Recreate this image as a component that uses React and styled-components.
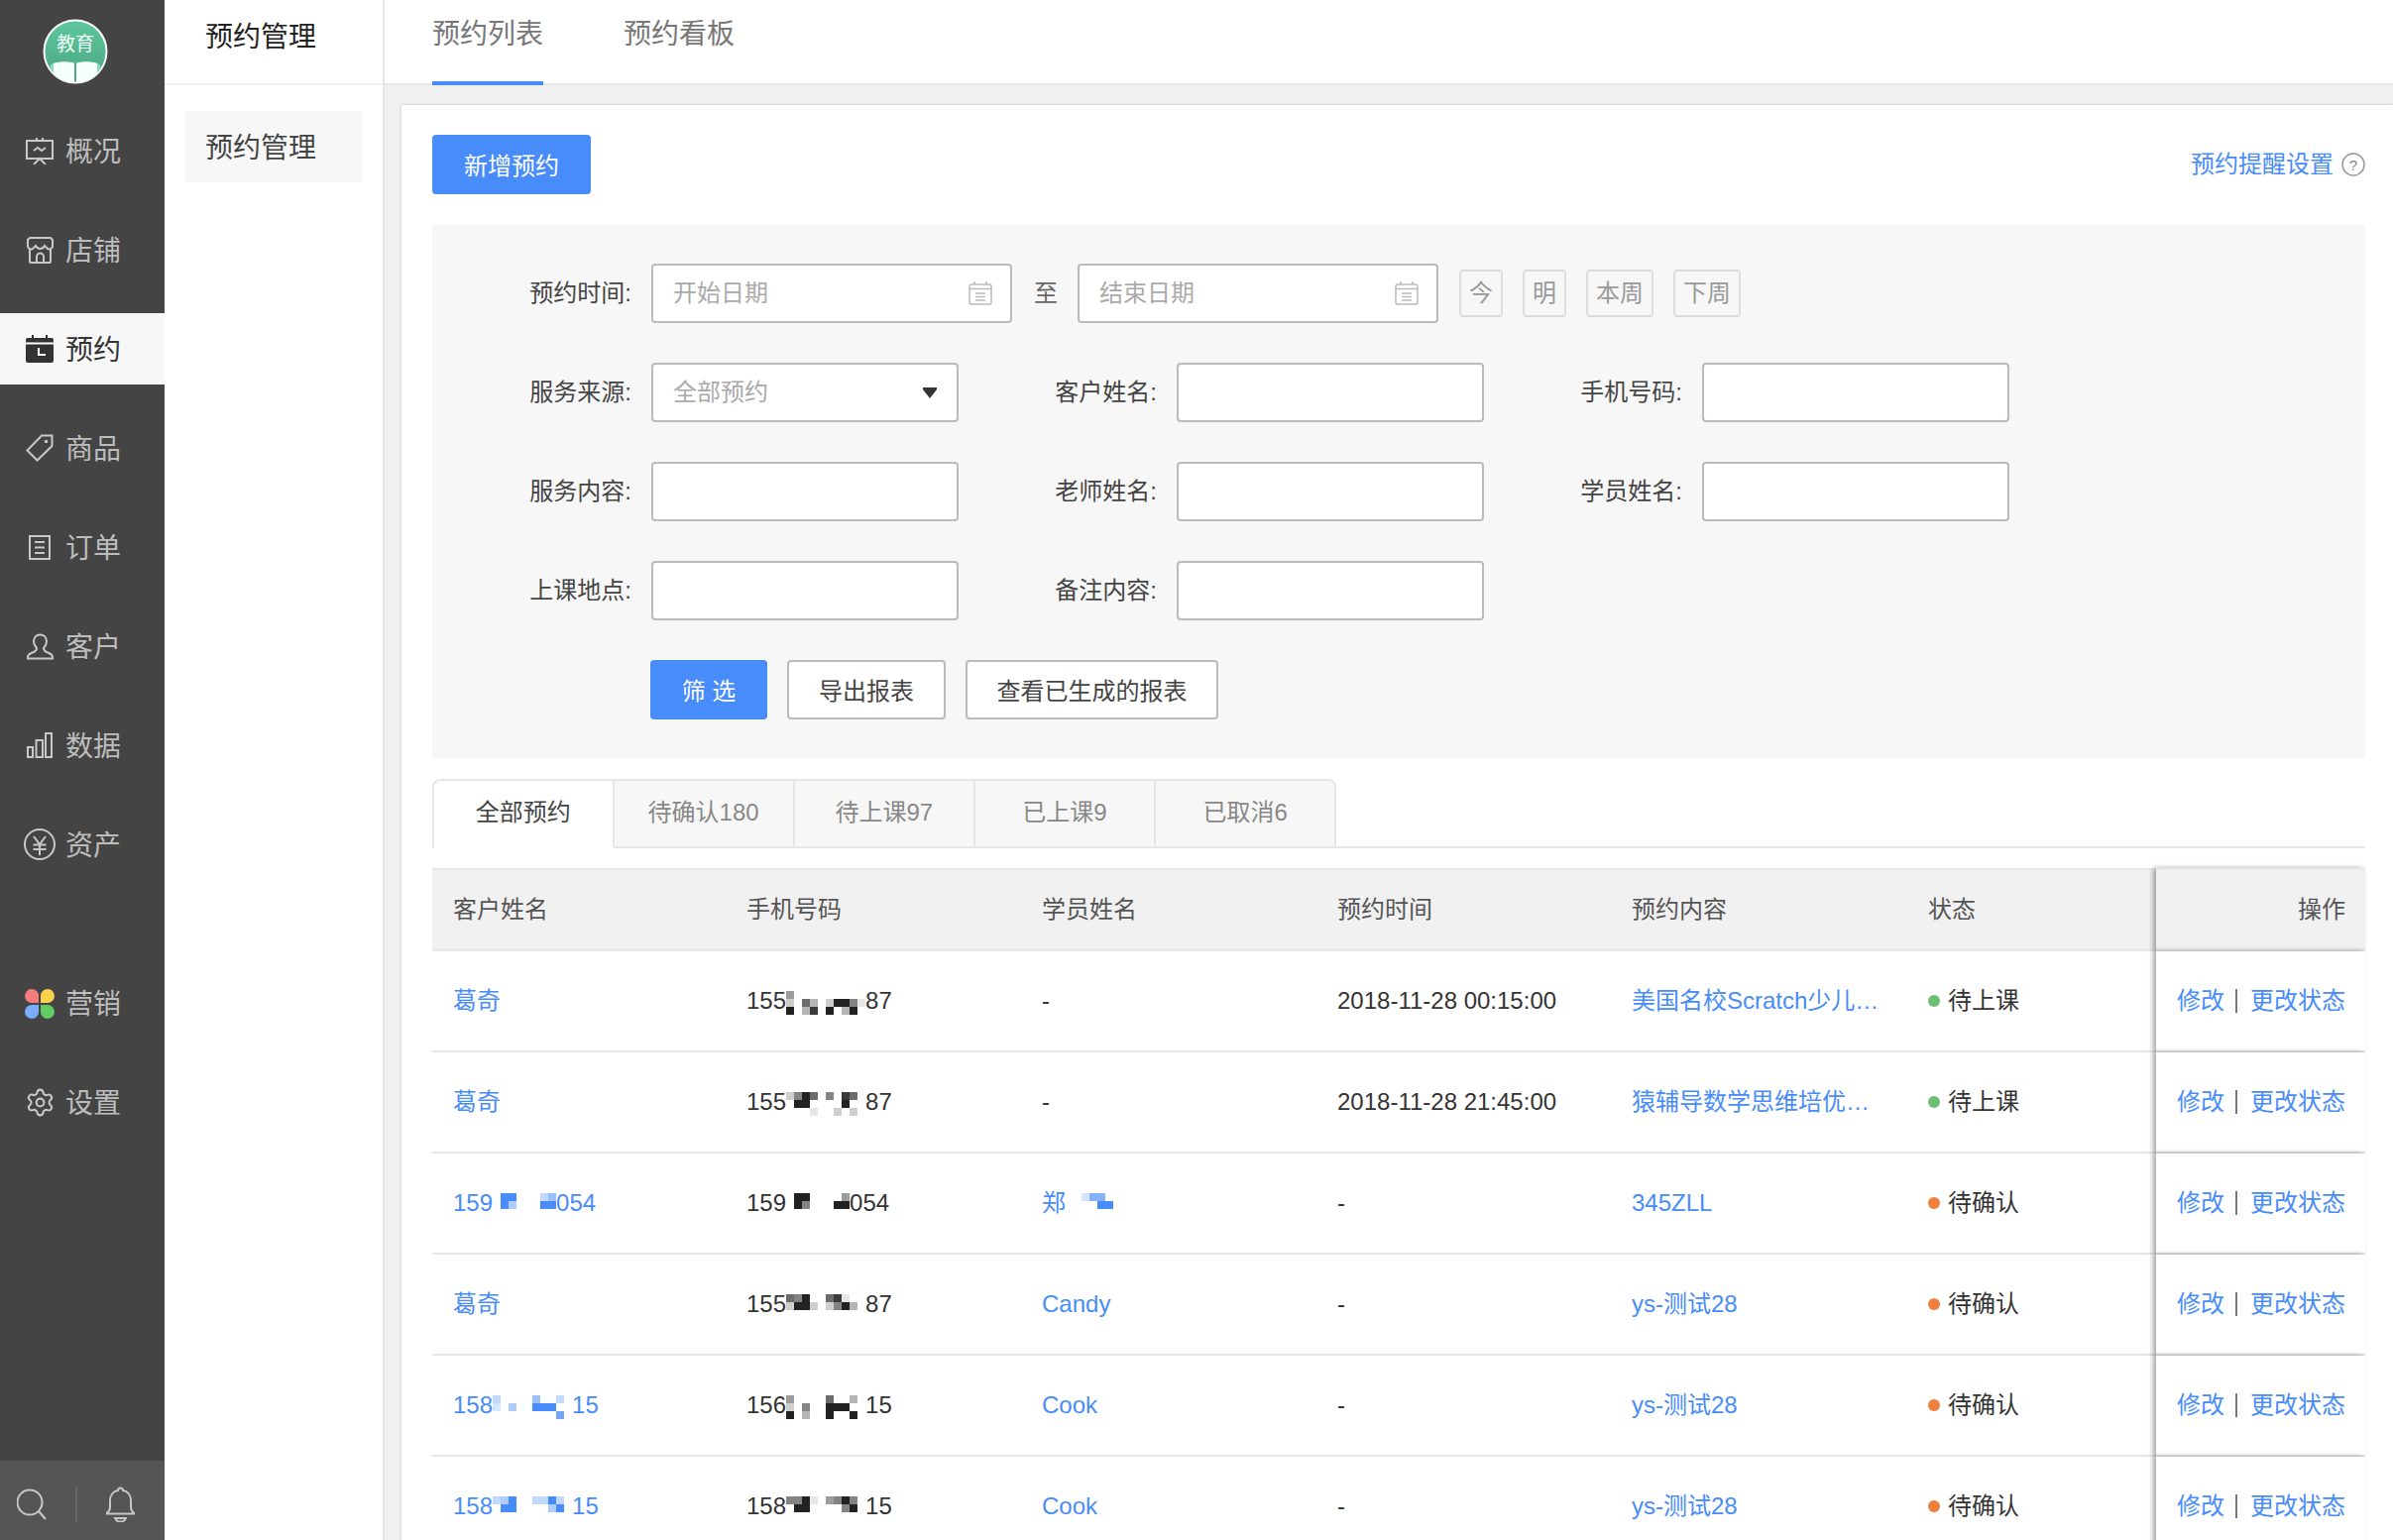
import React from 'react';
import styled, { createGlobalStyle } from 'styled-components';
import { Settings } from 'lucide-react';

const BLUE = '#488cf9';
const FONT = '"Liberation Sans", "Noto Sans CJK SC", sans-serif';

const GlobalStyle = createGlobalStyle`
  html, body { margin: 0; padding: 0; height: 100%; overflow: hidden; background: #fff; }
  * { box-sizing: border-box; }
  body { font-family: ${FONT}; font-size: 24px; line-height: 32px; color: #333; }
  input { font-family: ${FONT}; font-size: 24px; }
`;

const Page = styled.div`
  display: flex;
  width: 2414px;
  height: 1554px;
  overflow: hidden;
`;

/* left dark nav */
const Sidebar = styled.nav`
  width: 166px;
  flex: none;
  background: #444;
  display: flex;
  flex-direction: column;
`;
const LogoWrap = styled.div`
  height: 116px;
  padding: 19px 0 0 43px;
  svg { display: block; }
`;
const NavItem = styled.div`
  height: 72px;
  margin-bottom: 28px;
  margin-top: ${p => (p.$spaced ? '60px' : '0')};
  padding-left: 24px;
  display: flex;
  align-items: center;
  font-size: 28px;
  color: ${p => (p.$active ? '#333' : '#bdbdbd')};
  background: ${p => (p.$active ? '#f7f7f7' : 'transparent')};
`;
const NavIcon = styled.span`
  width: 32px;
  margin-right: 10px;
  display: flex;
  justify-content: center;
  svg { display: block; }
`;
const NavText = styled.span`
  padding-top: 3px;
`;
const SideBottom = styled.div`
  margin-top: auto;
  height: 80px;
  background: #555;
  display: flex;
  align-items: center;
  padding: 8px 0 0 17px;
  svg { display: block; }
`;
const SideDivider = styled.span`
  width: 2px;
  height: 36px;
  background: #666;
  margin: 0 29px;
`;

/* second column */
const SubNav = styled.aside`
  width: 222px;
  flex: none;
  background: #fff;
  border-right: 2px solid #e6e6e6;
`;
const SubTitle = styled.div`
  height: 86px;
  border-bottom: 2px solid #f0f0f0;
  padding-left: 41px;
  line-height: 75px;
  font-size: 28px;
  color: #222;
`;
const SubItem = styled.div`
  margin: 26px 20px 0;
  height: 72px;
  line-height: 75px;
  padding-left: 21px;
  background: #f7f7f7;
  border-radius: 4px;
  font-size: 28px;
  color: #444;
`;

const Main = styled.main`
  flex: 1;
  min-width: 0;
  background: #f0f0f0;
  display: flex;
  flex-direction: column;
`;
const TopTabs = styled.div`
  height: 86px;
  flex: none;
  background: #fff;
  border-bottom: 2px solid #e6e6e6;
  padding-left: 48px;
  display: flex;
  gap: 81px;
`;
const TopTab = styled.div`
  height: 86px;
  width: 112px;
  line-height: 70px;
  font-size: 28px;
  white-space: nowrap;
  color: #777;
  border-bottom: 4px solid ${p => (p.$active ? BLUE : 'transparent')};
`;
const Card = styled.div`
  flex: 1;
  margin: 20px 0 0 17px;
  padding: 30px 28px 0 31px;
  background: #fff;
  box-shadow: 0 0 3px rgba(0, 0, 0, 0.2);
`;
const CardHead = styled.div`
  display: flex;
  align-items: center;
  justify-content: space-between;
  margin-bottom: 30px;
`;
const SolidBtn = styled.button`
  height: 60px;
  width: ${p => p.$w}px;
  border: 0;
  border-radius: 4px;
  background: ${BLUE};
  color: #fff;
  font: 24px/32px ${FONT};
  padding: 3px 0 0;
`;
const HelpLink = styled.div`
  display: flex;
  align-items: center;
  gap: 8px;
  color: ${BLUE};
  font-size: 24px;
  svg { display: block; }
`;

/* filter panel */
const Panel = styled.section`
  background: #f7f7f7;
  padding: 40px 0 40px 1px;
  display: flex;
  flex-direction: column;
  gap: 40px;
`;
const DateRow = styled.div`
  display: flex;
  align-items: center;
  height: 60px;
`;
const FieldGrid = styled.div`
  display: grid;
  grid-template-columns: repeat(3, 530px);
  row-gap: 40px;
`;
const Field = styled.div`
  display: flex;
  align-items: center;
`;
const Label = styled.label`
  width: 200px;
  margin-right: 20px;
  text-align: right;
  color: #444;
  white-space: nowrap;
`;
const TextInput = styled.input`
  width: 310px;
  height: 60px;
  background: #fff;
  border: 2px solid #bbb;
  border-radius: 4px;
  padding: 0 20px;
  outline: none;
`;
const DateBox = styled.div`
  width: 364px;
  height: 60px;
  background: #fff;
  border: 2px solid #bbb;
  border-radius: 4px;
  padding: 0 18px 0 20px;
  display: flex;
  align-items: center;
  justify-content: space-between;
  svg { display: block; }
`;
const Placeholder = styled.span`
  color: #aaa;
`;
const SelectBox = styled(DateBox)`
  width: 310px;
  padding-right: 20px;
`;
const To = styled.span`
  margin: 0 20px 0 22px;
  color: #666;
`;
const QuickDates = styled.div`
  display: flex;
  gap: 20px;
  margin-left: 21px;
`;
const QuickBtn = styled.span`
  height: 48px;
  line-height: 44px;
  padding: 0 8px;
  border: 2px solid #ddd;
  border-radius: 4px;
  color: #999;
`;
const ActionRow = styled.div`
  display: flex;
  gap: 20px;
  padding-left: 219px;
`;
const GhostBtn = styled.button`
  height: 60px;
  width: ${p => p.$w}px;
  background: #fff;
  border: 2px solid #bbb;
  border-radius: 4px;
  color: #444;
  font: 24px/32px ${FONT};
  padding: 3px 0 0;
`;

/* status tabs */
const StatusTabs = styled.div`
  display: flex;
  height: 70px;
  margin-top: 20px;
  border-bottom: 2px solid #e6e6e6;
`;
const StatusTab = styled.div`
  width: ${p => (p.$first ? '183.5px' : '182.2px')};
  height: 70px;
  text-align: center;
  line-height: 64px;
  border-top: 2px solid #e6e6e6;
  border-right: 2px solid #e6e6e6;
  border-left: ${p => (p.$first ? '2px solid #e6e6e6' : '0')};
  border-bottom: 2px solid ${p => (p.$active ? '#fff' : '#e6e6e6')};
  border-radius: ${p => (p.$first ? '8px 0 0 0' : p.$last ? '0 8px 0 0' : '0')};
  background: ${p => (p.$active ? '#fff' : '#f7f7f7')};
  color: ${p => (p.$active ? '#444' : '#888')};
`;

/* table */
const Table = styled.div`
  margin-top: 20px;
`;
const Row = styled.div`
  display: grid;
  grid-template-columns: 296px 298px 298px 297px 299px 251px 211px;
`;
const HeadCell = styled.div`
  height: 84px;
  display: flex;
  align-items: center;
  justify-content: ${p => (p.$right ? 'flex-end' : 'flex-start')};
  padding: 0 20px 0 21px;
  background: #f1f1f1;
  border-top: 2px solid #e8e8e8;
  border-bottom: 3px solid #e8e8e8;
  color: #555;
  box-shadow: ${p => (p.$fixed ? '-3px 0 5px rgba(0, 0, 0, 0.35)' : 'none')};
  position: ${p => (p.$fixed ? 'relative' : 'static')};
`;
const Cell = styled.div`
  height: 102px;
  display: flex;
  align-items: center;
  padding-left: 21px;
  border-bottom: 2px solid #e6e6e6;
  color: ${p => (p.$link ? BLUE : '#333')};
  white-space: nowrap;
  svg { display: block; margin-top: 4px; }
`;
const FixedCell = styled(Cell)`
  justify-content: flex-end;
  padding: 0 20px 0 0;
  background: #fff;
  color: ${BLUE};
  box-shadow: -3px 0 5px rgba(0, 0, 0, 0.35);
  position: relative;
`;
const Sep = styled.span`
  width: 2px;
  height: 24px;
  background: #777;
  margin: 0 13px 0 11px;
`;
const Dot = styled.span`
  width: 12px;
  height: 12px;
  border-radius: 50%;
  margin-right: 8px;
  background: ${p => (p.$tone === 'green' ? '#6cbf72' : '#ef7f3c')};
`;

// one pixelated blur block, rows are strings of darkness 0-9
function Mosaic({ rows, color = '#222' }) {
  const cols = rows[0].length;
  return (
    <svg width={cols * 8} height={24} viewBox={`0 0 ${cols * 8} 24`}>
      {rows.map((r, y) =>
        r.split('').map((c, x) =>
          c === '.' ? null : (
            <rect key={`${x}-${y}`} x={x * 8} y={y * 8} width={8} height={8} fill={color} opacity={Number(c) / 9} />
          )
        )
      )}
    </svg>
  );
}

function Logo() {
  return (
    <svg width="66" height="66" viewBox="0 0 66 66">
      <defs>
        <linearGradient id="logoGreen" x1="0" y1="0" x2="0" y2="1">
          <stop offset="0" stopColor="#5ec79d" />
          <stop offset="1" stopColor="#4ba581" />
        </linearGradient>
        <clipPath id="logoClip"><circle cx="33" cy="33" r="31" /></clipPath>
      </defs>
      <circle cx="33" cy="33" r="31.500" fill="url(#logoGreen)" stroke="#fff" strokeWidth="2" />
      <text x="33" y="32" textAnchor="middle" fontSize="19" fill="#e9fff5" fontFamily={FONT}>教育</text>
      <g clipPath="url(#logoClip)">
        <path d="M8 46c6-3 15-4 24-2v22H8z M34 44c9-2 18-1 24 2v20H34z" fill="#8fd8bc" />
        <path d="M11 45c6-2 15-2 21 0v21H11z M34 45c6-2 15-2 21 0v21H34z" fill="#f6fffb" />
      </g>
    </svg>
  );
}

const ico = { fill: 'none', stroke: '#c8c8c8', strokeWidth: 2 };

const IconBoard = () => (
  <svg width="28" height="28" viewBox="0 0 28 28" {...ico}>
    <path d="M1 4h26v18H1z M11 4V1 M17 4V1 M8 14l4-3 4 3 4-3 M8 28l6-6 6 6" />
  </svg>
);
const IconStore = () => (
  <svg width="27" height="27" viewBox="0 0 27 27" {...ico}>
    <path d="M3 1h21l2 2v7c-1 2-3 3-5 2l-3-3c-1 2-3 3-4.500 3s-3.500-1-4.500-3l-3 3c-2 1-4 0-5-2V3z" />
    <path d="M3 12v13a1 1 0 0 0 1 1h19a1 1 0 0 0 1-1V12 M10 26v-6a3.500 3.500 0 0 1 7 0v6" />
  </svg>
);
const IconCalendar = () => (
  <svg width="28" height="28" viewBox="0 0 28 28">
    <path d="M2 3h4V0h2v3h12V0h2v3h4a2 2 0 0 1 2 2v21a2 2 0 0 1-2 2H2a2 2 0 0 1-2-2V5a2 2 0 0 1 2-2z" fill="#333" />
    <path d="M0 8.500h28" stroke="#fff" strokeWidth="2" />
    <path d="M13 13v7h7" stroke="#fff" strokeWidth="2" fill="none" />
  </svg>
);
const IconTag = () => (
  <svg width="28" height="28" viewBox="0 0 28 28" {...ico}>
    <path d="M16 1.500l10.500 0v10.500L11.500 26.500 1.500 16.500z" />
    <circle cx="20.500" cy="7.500" r="1.800" fill="#c8c8c8" stroke="none" />
  </svg>
);
const IconOrder = () => (
  <svg width="22" height="25" viewBox="0 0 22 25" {...ico}>
    <path d="M1 1h20v23H1z M6 7h10 M6 12.500h10 M6 18h10" />
  </svg>
);
const IconUser = () => (
  <svg width="27" height="27" viewBox="0 0 27 27" {...ico}>
    <path d="M13.500 1.500c-4 0-6.500 3-6.500 7 0 3 1.500 5 3 6.500 0 2-1 3-3 4-3 1-6 2-6 5v1.500h25V24c0-3-3-4-6-5-2-1-3-2-3-4 1.500-1.500 3-3.500 3-6.500 0-4-2.500-7-6.500-7z" />
  </svg>
);
const IconBars = () => (
  <svg width="26" height="26" viewBox="0 0 26 26" {...ico}>
    <path d="M1 15h5v10H1z M9.500 8h6.500v17H9.500z M19 1h6v24h-6z" />
  </svg>
);
const IconYen = () => (
  <svg width="32" height="32" viewBox="0 0 32 32" {...ico}>
    <circle cx="16" cy="16" r="15" />
    <path d="M10 8l6 8 6-8 M9.500 16.500h13 M9.500 21h13 M16 16.500V27" />
  </svg>
);
const IconPetals = () => (
  <svg width="30" height="31" viewBox="0 0 30 31">
    <path d="M14 15H7a7 7 0 1 1 7-7.500z" fill="#f27c7e" />
    <path d="M16 15h7a7 7 0 1 0-7-7.500z" fill="#fbd14b" />
    <path d="M14 17H7a7 7 0 1 0 7 7.500z" fill="#78adff" />
    <path d="M16 17h7a7 7 0 1 1-7 7.500z" fill="#62cb62" />
  </svg>
);
const IconSearch = () => (
  <svg width="30" height="32" viewBox="0 0 30 32" {...ico}>
    <circle cx="13" cy="14" r="12.500" />
    <path d="M22 23l7 8" />
  </svg>
);
const IconBell = () => (
  <svg width="29" height="36" viewBox="0 0 29 36" {...ico}>
    <path d="M12 4a2.500 2.500 0 0 1 5 0c5 1 8 5 8 10v7c0 3 1 4 3 5.500v1H1v-1c2-1.500 3-2.500 3-5.500v-7c0-5 3-9 8-10z" />
    <path d="M9 32h11c-1 2.500-3 3.500-5.500 3.500S10 34.500 9 32z" />
  </svg>
);
const IconDate = () => (
  <svg width="24" height="24" viewBox="0 0 24 24" fill="none" stroke="#bbb" strokeWidth="1.500">
    <rect x="1" y="3" width="22" height="20" rx="2" />
    <path d="M1 7.500h22 M6 0v3 M18 0v3 M7 12h10 M7 15.500h10 M7 19h10" />
  </svg>
);
const IconCaret = () => (
  <svg width="14" height="11" viewBox="0 0 14 11"><path d="M0 0h14v2l-7 9-7-9z" fill="#333" /></svg>
);
const IconHelp = () => (
  <svg width="24" height="24" viewBox="0 0 24 24">
    <circle cx="12" cy="12" r="11" fill="none" stroke="#999" strokeWidth="1.500" />
    <text x="12" y="17.500" textAnchor="middle" fontSize="15" fill="#888" fontFamily={FONT}>?</text>
  </svg>
);

const navItems = [
  { label: '概况', icon: <IconBoard /> },
  { label: '店铺', icon: <IconStore /> },
  { label: '预约', icon: <IconCalendar />, active: true },
  { label: '商品', icon: <IconTag /> },
  { label: '订单', icon: <IconOrder /> },
  { label: '客户', icon: <IconUser /> },
  { label: '数据', icon: <IconBars /> },
  { label: '资产', icon: <IconYen /> },
  { label: '营销', icon: <IconPetals />, spaced: true },
  { label: '设置', icon: <Settings size={31} color="#c8c8c8" strokeWidth={1.6} /> },
];

const statusTabs = ['全部预约', '待确认180', '待上课97', '已上课9', '已取消6'];
const columns = ['客户姓名', '手机号码', '学员姓名', '预约时间', '预约内容', '状态'];

const rows = [
  {
    customer: <>葛奇</>,
    phone: <>155<Mosaic rows={['4.........', '2.63.29951', '9.38.9.39.']} />87</>,
    student: '-',
    time: '2018-11-28 00:15:00',
    content: '美国名校Scratch少儿…',
    status: '待上课',
    tone: 'green',
  },
  {
    customer: <>葛奇</>,
    phone: <>155<Mosaic rows={['2596.5.86.', '.99....9..', '...1..2.2.']} />87</>,
    student: '-',
    time: '2018-11-28 21:45:00',
    content: '猿辅导数学思维培优…',
    status: '待上课',
    tone: 'green',
  },
  {
    customer: <>159<Mosaic color={BLUE} rows={['.99...35', '.94...99']} />054</>,
    phone: <>159<Mosaic rows={['.99....4', '.95...99']} />054</>,
    student: <>郑<Mosaic color={BLUE} rows={['..266.', '....99']} /></>,
    studentLink: true,
    time: '-',
    content: '345ZLL',
    status: '待确认',
    tone: 'orange',
  },
  {
    customer: <>葛奇</>,
    phone: <>155<Mosaic rows={['659..681..', '2992.2593.']} />87</>,
    student: 'Candy',
    studentLink: true,
    time: '-',
    content: 'ys-测试28',
    status: '待确认',
    tone: 'orange',
  },
  {
    customer: <>158<Mosaic color={BLUE} rows={['3....5..3.', '2.4..999..', '........7.']} />15</>,
    phone: <>156<Mosaic rows={['4....6..3.', '2.5..999..', '9.3..9..9.']} />15</>,
    student: 'Cook',
    studentLink: true,
    time: '-',
    content: 'ys-测试28',
    status: '待确认',
    tone: 'orange',
  },
  {
    customer: <>158<Mosaic color={BLUE} rows={['349..3393.', '.99....49.']} />15</>,
    phone: <>158<Mosaic rows={['5591.4595.', '.99....59.']} />15</>,
    student: 'Cook',
    studentLink: true,
    time: '-',
    content: 'ys-测试28',
    status: '待确认',
    tone: 'orange',
  },
];

export default function App() {
  return (
    <>
      <GlobalStyle />
      <Page>
        <Sidebar>
          <LogoWrap><Logo /></LogoWrap>
          {navItems.map(item => (
            <NavItem key={item.label} $active={item.active} $spaced={item.spaced}>
              <NavIcon>{item.icon}</NavIcon>
              <NavText>{item.label}</NavText>
            </NavItem>
          ))}
          <SideBottom>
            <IconSearch />
            <SideDivider />
            <IconBell />
          </SideBottom>
        </Sidebar>

        <SubNav>
          <SubTitle>预约管理</SubTitle>
          <SubItem>预约管理</SubItem>
        </SubNav>

        <Main>
          <TopTabs>
            <TopTab $active>预约列表</TopTab>
            <TopTab>预约看板</TopTab>
          </TopTabs>
          <Card>
            <CardHead>
              <SolidBtn $w={160}>新增预约</SolidBtn>
              <HelpLink>预约提醒设置<IconHelp /></HelpLink>
            </CardHead>

            <Panel>
              <DateRow>
                <Label>预约时间:</Label>
                <DateBox><Placeholder>开始日期</Placeholder><IconDate /></DateBox>
                <To>至</To>
                <DateBox><Placeholder>结束日期</Placeholder><IconDate /></DateBox>
                <QuickDates>
                  <QuickBtn>今</QuickBtn>
                  <QuickBtn>明</QuickBtn>
                  <QuickBtn>本周</QuickBtn>
                  <QuickBtn>下周</QuickBtn>
                </QuickDates>
              </DateRow>
              <FieldGrid>
                <Field>
                  <Label>服务来源:</Label>
                  <SelectBox><Placeholder>全部预约</Placeholder><IconCaret /></SelectBox>
                </Field>
                <Field><Label>客户姓名:</Label><TextInput /></Field>
                <Field><Label>手机号码:</Label><TextInput /></Field>
                <Field><Label>服务内容:</Label><TextInput /></Field>
                <Field><Label>老师姓名:</Label><TextInput /></Field>
                <Field><Label>学员姓名:</Label><TextInput /></Field>
                <Field><Label>上课地点:</Label><TextInput /></Field>
                <Field><Label>备注内容:</Label><TextInput /></Field>
              </FieldGrid>
              <ActionRow>
                <SolidBtn $w={118}>筛 选</SolidBtn>
                <GhostBtn $w={160}>导出报表</GhostBtn>
                <GhostBtn $w={255}>查看已生成的报表</GhostBtn>
              </ActionRow>
            </Panel>

            <StatusTabs>
              {statusTabs.map((t, i) => (
                <StatusTab key={t} $active={i === 0} $first={i === 0} $last={i === statusTabs.length - 1}>{t}</StatusTab>
              ))}
            </StatusTabs>

            <Table>
              <Row>
                {columns.map(c => <HeadCell key={c}>{c}</HeadCell>)}
                <HeadCell $right $fixed>操作</HeadCell>
              </Row>
              {rows.map((r, i) => (
                <Row key={i}>
                  <Cell $link>{r.customer}</Cell>
                  <Cell>{r.phone}</Cell>
                  <Cell $link={r.studentLink}>{r.student}</Cell>
                  <Cell>{r.time}</Cell>
                  <Cell $link>{r.content}</Cell>
                  <Cell><Dot $tone={r.tone} />{r.status}</Cell>
                  <FixedCell>修改<Sep />更改状态</FixedCell>
                </Row>
              ))}
            </Table>
          </Card>
        </Main>
      </Page>
    </>
  );
}
